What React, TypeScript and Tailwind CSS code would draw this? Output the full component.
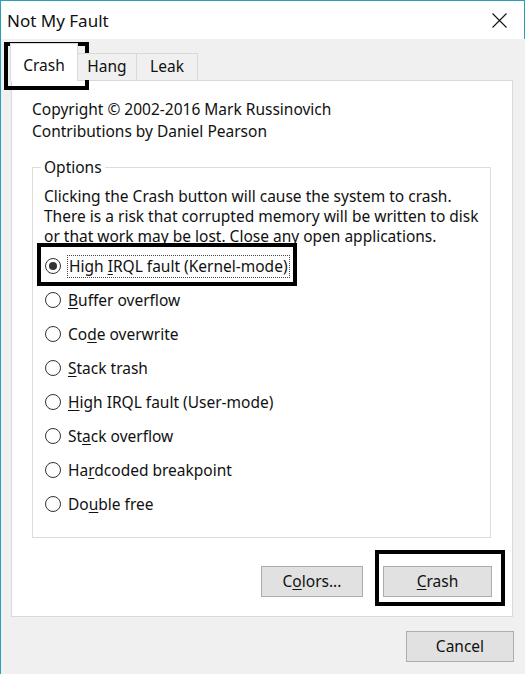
import type { ReactNode } from 'react';

type Opt = { label: string; key: number };

const OPTIONS: Opt[] = [
  { label: 'High IRQL fault (Kernel-mode)', key: 5 },
  { label: 'Buffer overflow', key: 0 },
  { label: 'Code overwrite', key: 2 },
  { label: 'Stack trash', key: 0 },
  { label: 'High IRQL fault (User-mode)', key: 0 },
  { label: 'Stack overflow', key: 2 },
  { label: 'Hardcoded breakpoint', key: 2 },
  { label: 'Double free', key: 2 },
];

// underline the access key letter
function Accel({ text, at }: { text: string; at: number }) {
  return (
    <>
      {text.slice(0, at)}
      <u className="underline-offset-2">{text[at]}</u>
      {text.slice(at + 1)}
    </>
  );
}

function Radio({ checked }: { checked?: boolean }) {
  return (
    <span className="w-[16px] h-[16px] rounded-full border border-[#333] bg-white flex items-center justify-center shrink-0">
      {checked && <span className="w-[8px] h-[8px] rounded-full bg-[#333]" />}
    </span>
  );
}

function Btn({ children, className }: { children: ReactNode; className: string }) {
  return (
    <button className={`h-[31px] bg-[#e1e1e1] border border-[#adadad] text-[15.5px] text-[#111] ${className}`}>
      {children}
    </button>
  );
}

export default function App() {
  return (
    <div className="relative w-[531px] h-[674px] bg-white overflow-hidden text-[#111] font-['Noto_Sans','Liberation_Sans',sans-serif]">
      <div className="w-[525px] h-full border-l border-t border-[#2aa0b4] flex flex-col">
        {/* title bar */}
        <div className="h-[38px] flex items-center justify-between pl-[6px] pr-[17px] border-r border-[#2aa0b4]">
          <span className="text-[17px] leading-none">Not My Fault</span>
          <svg width="15" height="15" viewBox="0 0 15 15">
            <path d="M0.5 0.5 L14.5 14.5 M14.5 0.5 L0.5 14.5" stroke="#111" strokeWidth="1.1" />
          </svg>
        </div>

        {/* client area */}
        <div className="flex-1 bg-[#f0f0f0] pt-[4px]">
          <div className="flex items-end pl-[9px] h-[37px] relative z-10">
            <div className="h-[38px] w-[68px] bg-white border border-b-0 border-[#d9d9d9] -mb-px flex items-center justify-center pt-[6px] text-[15.5px]">
              Crash
            </div>
            <div className="h-[27px] w-[59px] bg-[#f0f0f0] border border-l-0 border-b-0 border-[#d9d9d9] flex items-center justify-center text-[15.5px]">
              Hang
            </div>
            <div className="h-[27px] w-[61px] bg-[#f0f0f0] border border-l-0 border-b-0 border-[#d9d9d9] flex items-center justify-center text-[15.5px]">
              Leak
            </div>
          </div>

          <div className="ml-[10px] w-[502px] h-[537px] bg-white border border-[#d9d9d9] pt-[17px] pl-[20px]">
            <div className="text-[15.5px] leading-[22px]">
              <div>Copyright © 2002-2016 Mark Russinovich</div>
              <div>Contributions by Daniel Pearson</div>
            </div>

            <fieldset className="mt-[15px] w-[459px] border border-[#dcdcdc] pl-[11px] pb-[16px]">
              <legend className="-ml-[3px] px-[3px] text-[15.5px] leading-[20px]">Options</legend>
              <div className="text-[15.5px] leading-[20px] mt-[9px]">
                <div>Clicking the Crash button will cause the system to crash.</div>
                <div>There is a risk that corrupted memory will be written to disk</div>
                <div>or that work may be lost. Close any open applications.</div>
              </div>
              <div className="mt-[3px] flex flex-col">
                {OPTIONS.map((o, i) => (
                  <div key={o.label} className="h-[34px] flex items-center gap-[7px] pl-px text-[15.5px]">
                    <Radio checked={i === 0} />
                    <span className={i === 0 ? 'outline-1 outline-dotted outline-[#444] px-px leading-[21px]' : 'leading-[21px]'}>
                      <Accel text={o.label} at={o.key} />
                    </span>
                  </div>
                ))}
              </div>
            </fieldset>

            <div className="flex justify-end gap-[20px] pr-[20px] mt-[28px]">
              <Btn className="w-[102px]">
                <Accel text="Colors..." at={1} />
              </Btn>
              <Btn className="w-[109px]">
                <Accel text="Crash" at={0} />
              </Btn>
            </div>
          </div>

          <div className="flex justify-end pr-[11px] mt-[14px]">
            <Btn className="w-[108px]">Cancel</Btn>
          </div>
        </div>
      </div>

      {/* highlight frames drawn over the dialog */}
      <div className="absolute left-[4px] top-[42px] w-[85px] h-[48px] border-[4px] border-black pointer-events-none" />
      <div className="absolute left-[37px] top-[243px] w-[260px] h-[43px] border-[4px] border-black pointer-events-none" />
      <div className="absolute left-[375px] top-[550px] w-[130px] h-[56px] border-[4px] border-black pointer-events-none" />
    </div>
  );
}
